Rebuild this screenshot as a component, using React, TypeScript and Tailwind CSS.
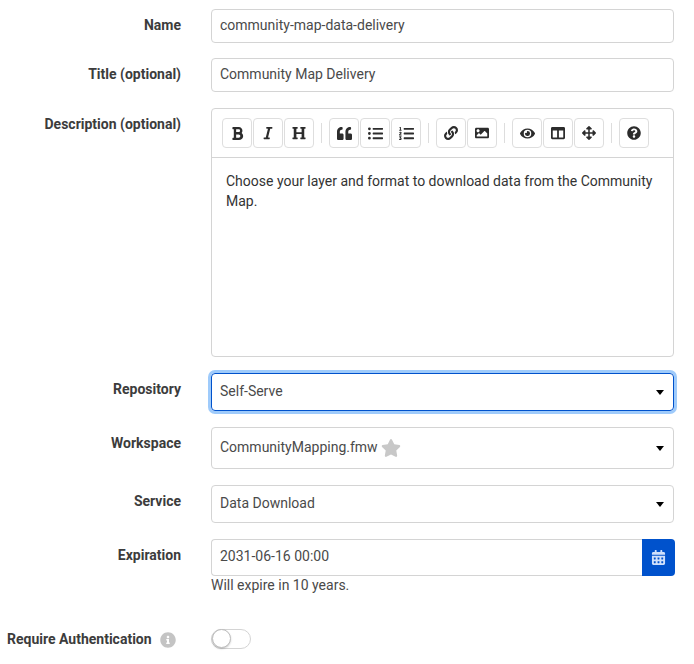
import type { ReactNode } from 'react';
import {
  FaBold,
  FaItalic,
  FaHeading,
  FaQuoteLeft,
  FaListUl,
  FaListOl,
  FaLink,
  FaImage,
  FaEye,
  FaColumns,
  FaArrowsAlt,
  FaQuestionCircle,
  FaStar,
  FaCalendarAlt,
  FaInfoCircle,
} from 'react-icons/fa';

function Row({ label, className, children }: { label: string; className?: string; children: ReactNode }) {
  return (
    <div className={`flex gap-[30px] ${className ?? ''}`}>
      <div className="w-[181px] pt-[6px] text-right text-[14px] leading-5 font-bold text-[#3c3c3c] shrink-0">{label}</div>
      <div className="w-[463px]">{children}</div>
    </div>
  );
}

function ToolButton({ children }: { children: ReactNode }) {
  return (
    <button className="w-[30px] h-[30px] flex items-center justify-center border border-[#dedede] rounded-[4px] bg-white text-[#2c2c2c]">
      {children}
    </button>
  );
}

function Divider() {
  return <span className="w-px h-[20px] bg-[#dddddd] mx-[6px]" />;
}

function Caret() {
  return <span className="w-0 h-0 border-x-[4.5px] border-x-transparent border-t-[5px] border-t-black" />;
}

function TextBox({ value }: { value: string }) {
  return (
    <div className="h-[34px] flex items-center px-2 pb-[2px] border border-[#d4d4d4] rounded-[4px] text-[14px] text-[#4a4a4a]">
      {value}
    </div>
  );
}

function SelectBox({ height, focused, children }: { height: string; focused?: boolean; children: ReactNode }) {
  return (
    <div
      className={`${height} flex items-center justify-between pl-2 pr-[9px] rounded-[4px] text-[14px] text-[#4a4a4a] border ${
        focused ? 'border-[#0052cc] shadow-[0_0_0_3px_#9fcbfb]' : 'border-[#d4d4d4]'
      }`}
    >
      <div className="flex items-center pb-[2px]">{children}</div>
      <Caret />
    </div>
  );
}

export default function App() {
  return (
    <main
      className="w-[694px] h-[664px] overflow-hidden bg-white pt-[9px]"
      style={{ fontFamily: 'Roboto, sans-serif' }}
    >
      <Row label="Name" className="items-start">
        <TextBox value="community-map-data-delivery" />
      </Row>
      <Row label="Title (optional)" className="mt-[15px]">
        <TextBox value="Community Map Delivery" />
      </Row>

      <Row label="Description (optional)" className="mt-[16px]">
        <div className="h-[249px] border border-[#d4d4d4] rounded-[4px]">
          <div className="h-[49px] flex items-center pl-[10px] border-b border-[#d4d4d4]">
            <div className="flex items-center gap-px">
              <ToolButton><FaBold size={15} /></ToolButton>
              <ToolButton><FaItalic size={14} /></ToolButton>
              <ToolButton><FaHeading size={14} /></ToolButton>
              <Divider />
              <ToolButton><FaQuoteLeft size={15} /></ToolButton>
              <ToolButton><FaListUl size={15} /></ToolButton>
              <ToolButton><FaListOl size={15} /></ToolButton>
              <Divider />
              <ToolButton><FaLink size={14} /></ToolButton>
              <ToolButton><FaImage size={14} /></ToolButton>
              <Divider />
              <ToolButton><FaEye size={15} /></ToolButton>
              <ToolButton><FaColumns size={14} /></ToolButton>
              <ToolButton><FaArrowsAlt size={14} /></ToolButton>
              <Divider />
              <ToolButton><FaQuestionCircle size={14} /></ToolButton>
            </div>
          </div>
          <p className="pt-[13px] pl-[14px] pr-[10px] text-[14px] leading-[20px] text-[#333333]">
            Choose your layer and format to download data from the Community Map.
          </p>
        </div>
      </Row>

      <Row label="Repository" className="mt-[16px]">
        <SelectBox height="h-[38px]" focused>Self-Serve</SelectBox>
      </Row>
      <Row label="Workspace" className="mt-[16px]">
        <SelectBox height="h-[42px]">
          CommunityMapping.fmw
          <FaStar size={20} className="ml-[3px] mt-[2px] text-[#c8c8c8]" />
        </SelectBox>
      </Row>
      <Row label="Service" className="mt-[16px]">
        <SelectBox height="h-[38px]">Data Download</SelectBox>
      </Row>

      <Row label="Expiration" className="mt-[16px]">
        <div className="flex h-[37px] w-[464px]">
          <div className="flex-1 flex items-center px-2 pb-[2px] border border-r-0 border-[#d4d4d4] rounded-l-[4px] text-[14px] text-[#4a4a4a]">
            2031-06-16 00:00
          </div>
          <div className="w-[33px] flex items-center justify-center bg-[#0052cc] rounded-r-[4px] text-[#cfe0fb]">
            <FaCalendarAlt size={15} />
          </div>
        </div>
        <div className="text-[14px] leading-[18px] text-[#4a4a4a]">Will expire in 10 years.</div>
      </Row>

      <div className="flex items-center mt-[33px] pl-[7px]">
        <span className="pt-[2px] text-[14px] font-bold text-[#3c3c3c]">Require Authentication</span>
        <FaInfoCircle size={16} className="ml-[8px] mt-[2px] text-[#c4c4c4]" />
        <span className="ml-[35px] w-[40px] h-[20px] rounded-full border border-[#d4d4d4] bg-white flex items-center">
          <span className="w-[19px] h-[19px] rounded-full bg-white border border-[#bdbdbd] shadow-[0_1px_2px_rgba(0,0,0,0.2)]" />
        </span>
      </div>
    </main>
  );
}
